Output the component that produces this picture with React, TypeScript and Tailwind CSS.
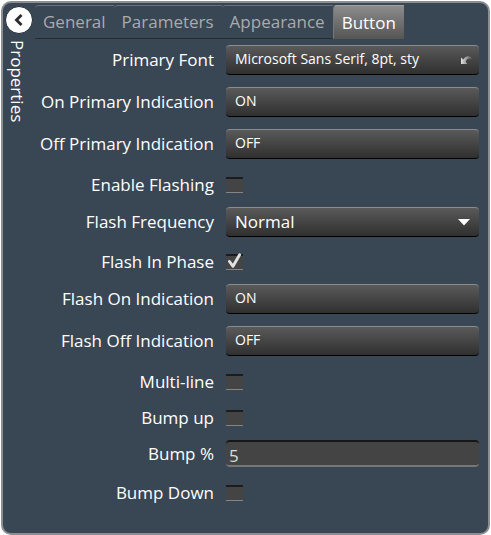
import React, { useState } from 'react'

type Kind = 'button' | 'font' | 'select' | 'check' | 'text'

interface Field {
  id: string
  label: string
  kind: Kind
  value?: string
  checked?: boolean
}

const tabs = ['General', 'Parameters', 'Appearance', 'Button']

const fields: Field[] = [
  { id: 'primary-font', label: 'Primary Font', kind: 'font', value: 'Microsoft Sans Serif, 8pt, sty' },
  { id: 'on-primary', label: 'On Primary Indication', kind: 'button', value: 'ON' },
  { id: 'off-primary', label: 'Off Primary Indication', kind: 'button', value: 'OFF' },
  { id: 'enable-flashing', label: 'Enable Flashing', kind: 'check' },
  { id: 'flash-frequency', label: 'Flash Frequency', kind: 'select', value: 'Normal' },
  { id: 'flash-in-phase', label: 'Flash In Phase', kind: 'check', checked: true },
  { id: 'flash-on', label: 'Flash On Indication', kind: 'button', value: 'ON' },
  { id: 'flash-off', label: 'Flash Off Indication', kind: 'button', value: 'OFF' },
  { id: 'multi-line', label: 'Multi-line', kind: 'check' },
  { id: 'bump-up', label: 'Bump up', kind: 'check' },
  { id: 'bump-percent', label: 'Bump %', kind: 'text', value: '5' },
  { id: 'bump-down', label: 'Bump Down', kind: 'check' },
]

const rowHeight: Record<Kind, string> = {
  button: 'h-[42px]',
  font: 'h-[42px]',
  select: 'h-[41px]',
  check: 'h-9 pt-1',
  text: 'h-[39px]',
}

const raised =
  'h-[30px] w-full rounded-[4px] border-t border-b border-t-[#8a8c8e] border-b-black bg-linear-to-b from-[#5a5a5a] to-[#303030] text-left text-white'

function Control({ field }: { field: Field }) {
  if (field.kind === 'check') {
    return (
      <span className="relative block h-4 w-[17px]">
        <input
          id={field.id}
          type="checkbox"
          defaultChecked={field.checked}
          className="peer block h-4 w-[17px] appearance-none border-t-2 border-b border-t-[#1c1c1c] border-b-[#858585] bg-[#444]"
        />
        <svg
          viewBox="0 0 17 17"
          className="pointer-events-none absolute -top-[3px] left-0 hidden h-[17px] w-[17px] peer-checked:block"
        >
          <path d="M3.5 10.5 7 15.3 13.6 3.8" fill="none" stroke="#e2e2e2" strokeWidth="2.9" strokeLinecap="round" strokeLinejoin="round" />
        </svg>
      </span>
    )
  }

  if (field.kind === 'select') {
    return (
      <div className="relative">
        <select id={field.id} defaultValue={field.value} className={`${raised} block appearance-none px-[9px] text-[17px] leading-6`}>
          <option>Slow</option>
          <option>Normal</option>
          <option>Fast</option>
        </select>
        <svg viewBox="0 0 12 7" className="pointer-events-none absolute top-3 right-[9px] h-[7px] w-3">
          <path d="M0 0h12L6 6.5z" fill="#fff" />
        </svg>
      </div>
    )
  }

  if (field.kind === 'text') {
    return (
      <input
        id={field.id}
        type="text"
        defaultValue={field.value}
        className="block h-[27px] w-full rounded-[4px] border-t-2 border-b-2 border-t-[#161616] border-b-[#777] bg-[#444] px-[3px] pt-1 text-[17px] text-[#ddd]"
      />
    )
  }

  return (
    <button id={field.id} type="button" className={`${raised} flex items-center justify-between pr-1 pb-[3px] pl-[9px] text-[14px] leading-5`}>
      <span className="whitespace-nowrap">{field.value}</span>
      {field.kind === 'font' && (
        <svg viewBox="0 0 14 12" className="h-3 w-3.5">
          <defs>
            <linearGradient id="undo" x1="0" x2="1">
              <stop offset="0" stopColor="#e2e2e2" />
              <stop offset="1" stopColor="#505050" />
            </linearGradient>
          </defs>
          <path d="M0 4.500v6.500h6.500L4.800 9C5.200 6 8 4.500 11.500 6.500 9.500 2 5 2 2.200 6.500z" fill="url(#undo)" />
        </svg>
      )}
    </button>
  )
}

export default function App() {
  const [active, setActive] = useState('Button')

  return (
    <div className="min-h-screen bg-white p-px font-['Open_Sans','Noto_Sans',sans-serif] text-white">
      <div className="flex rounded-[10px] border-2 border-[#8b8f92] bg-[#394653] pb-6">
        <aside className="flex w-8 shrink-0 flex-col items-center pt-[3px]">
          <button
            type="button"
            aria-label="Collapse"
            className="flex h-7 w-7 items-center justify-center rounded-full border border-[#222b33] bg-white"
          >
            <svg viewBox="0 0 12 12" className="h-3 w-3">
              <path d="M8.500 1 3.500 6l5 5" fill="none" stroke="#2d2d2d" strokeWidth="2.900" />
            </svg>
          </button>
          <h2 className="mt-1.5 pr-1 text-[17px] leading-5 [writing-mode:vertical-rl]">Properties</h2>
        </aside>

        <main className="min-w-0 flex-1 pt-0.5">
          <div role="tablist" className="flex h-[34px]">
            {tabs.map((tab) => (
              <button
                key={tab}
                type="button"
                role="tab"
                aria-selected={tab === active}
                onClick={() => setActive(tab)}
                className={
                  tab === active
                    ? 'rounded-tl-[4px] border-t border-l border-t-[#a0a0a0] border-l-[#777] bg-linear-to-b from-[#8c8c8c] to-[#555] px-2 text-[17px] leading-6 text-white'
                    : 'rounded-tl-[4px] border-t border-b border-t-[#6b7075] border-b-[#242a30] px-2 text-[17px] leading-6 text-[#a9abad]'
                }
              >
                {tab}
              </button>
            ))}
          </div>

          <form className="pr-[9px]">
            {fields.map((field) => (
              <div key={field.id} className={`flex items-center gap-3 ${rowHeight[field.kind]}`}>
                <label htmlFor={field.id} className="w-[179px] shrink-0 text-right text-[17px] leading-6 whitespace-nowrap">
                  {field.label}
                </label>
                <div className="min-w-0 flex-1">
                  <Control field={field} />
                </div>
              </div>
            ))}
          </form>
        </main>
      </div>
    </div>
  )
}
